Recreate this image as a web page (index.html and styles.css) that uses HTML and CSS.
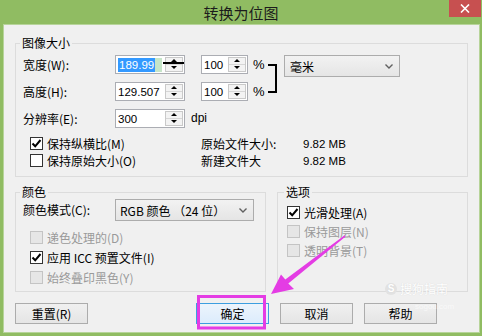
FILE: index.html
```html
<!DOCTYPE html>
<html lang="zh-CN">
<head>
    <meta charset="UTF-8">
    <title>转换为位图</title>
    <link rel="stylesheet" href="styles.css">
</head>
<body>
<div class="window">
    <div class="titlebar">
        <h1 class="titlebar__title">转换为位图</h1>
        <button class="titlebar__close" type="button">
            <svg width="10" height="9" viewBox="0 0 10 9"><path d="M1 0.5 L9 8.5 M9 0.5 L1 8.5" stroke="#fff" stroke-width="1.6"/></svg>
        </button>
    </div>

    <div class="dialog">
        <fieldset class="group group--size">
            <legend class="group__title">图像大小</legend>
            <div class="size-grid">
                <span class="field-label">宽度(W):</span>
                <div class="spin spin--wide">
                    <span class="spin__value"><span class="spin__sel">189.99</span><span class="spin__tint"></span></span>
                    <span class="spin__btns"><i class="spin__up"></i><i class="spin__down"></i></span>
                    <span class="spin__mark"></span>
                </div>
                <div class="spin spin--pct">
                    <span class="spin__value">100</span>
                    <span class="spin__btns"><i class="spin__up"></i><i class="spin__down"></i></span>
                </div>
                <span class="unit">%</span>
                <span class="bracket"></span>
                <div class="combo combo--units">
                    <span>毫米</span>
                    <svg width="8" height="5" viewBox="0 0 8 5"><path d="M0.5 0.5 L4 4 L7.5 0.5" fill="none" stroke="#606060" stroke-width="1.4"/></svg>
                </div>

                <span class="field-label">高度(H):</span>
                <div class="spin spin--wide">
                    <span class="spin__value">129.507</span>
                    <span class="spin__btns"><i class="spin__up"></i><i class="spin__down"></i></span>
                </div>
                <div class="spin spin--pct">
                    <span class="spin__value">100</span>
                    <span class="spin__btns"><i class="spin__up"></i><i class="spin__down"></i></span>
                </div>
                <span class="unit">%</span>

                <span class="field-label">分辨率(E):</span>
                <div class="spin spin--wide">
                    <span class="spin__value">300</span>
                    <span class="spin__btns"><i class="spin__up"></i><i class="spin__down"></i></span>
                </div>
                <span class="unit unit--dpi">dpi</span>
            </div>

            <div class="size-info">
                <label class="check">
                    <span class="check__box"><svg width="11" height="11" viewBox="0 0 11 11"><path d="M1.5 5.5 L4.2 8.3 L9.5 2" fill="none" stroke="#000" stroke-width="2"/></svg></span>
                    保持纵横比(M)
                </label>
                <span class="info-label">原始文件大小:</span>
                <span class="info-value">9.82 MB</span>

                <label class="check">
                    <span class="check__box"></span>
                    保持原始大小(O)
                </label>
                <span class="info-label">新建文件大</span>
                <span class="info-value">9.82 MB</span>
            </div>
        </fieldset>

        <div class="groups-row">
            <fieldset class="group group--color">
                <legend class="group__title">颜色</legend>
                <div class="color-mode">
                    <span class="field-label">颜色模式(C):</span>
                    <div class="combo combo--mode">
                        <span>RGB 颜色 （24 位）</span>
                        <svg width="8" height="5" viewBox="0 0 8 5"><path d="M0.5 0.5 L4 4 L7.5 0.5" fill="none" stroke="#606060" stroke-width="1.4"/></svg>
                    </div>
                </div>
                <div class="check-list">
                    <label class="check check--disabled"><span class="check__box"></span>递色处理的(D)</label>
                    <label class="check">
                        <span class="check__box"><svg width="11" height="11" viewBox="0 0 11 11"><path d="M1.5 5.5 L4.2 8.3 L9.5 2" fill="none" stroke="#000" stroke-width="2"/></svg></span>
                        应用 ICC 预置文件(I)
                    </label>
                    <label class="check check--disabled"><span class="check__box"></span>始终叠印黑色(Y)</label>
                </div>
            </fieldset>

            <fieldset class="group group--options">
                <legend class="group__title">选项</legend>
                <div class="check-list check-list--tight">
                    <label class="check">
                        <span class="check__box"><svg width="11" height="11" viewBox="0 0 11 11"><path d="M1.5 5.5 L4.2 8.3 L9.5 2" fill="none" stroke="#000" stroke-width="2"/></svg></span>
                        光滑处理(A)
                    </label>
                    <label class="check check--disabled"><span class="check__box"></span>保持图层(N)</label>
                    <label class="check check--disabled"><span class="check__box"></span>透明背景(T)</label>
                </div>
            </fieldset>
        </div>

        <div class="buttons">
            <button class="btn btn--reset" type="button">重置(R)</button>
            <button class="btn btn--default" type="button">确定</button>
            <button class="btn" type="button">取消</button>
            <button class="btn" type="button">帮助</button>
        </div>
    </div>

    <div class="watermark">
        <span class="watermark__logo"><span class="watermark__s">S</span>搜狗指南</span>
        <span class="watermark__url">sogou.com</span>
    </div>

    <!-- пометки поверх скриншота -->
    <svg class="markup" width="482" height="336" viewBox="0 0 482 336">
        <rect x="198.5" y="296.5" width="66" height="31.5" fill="none" stroke="#e43ce4" stroke-width="3"/>
        <polygon fill="#e43ce4" points="271,294 281,274.5 285.3,279.6 344.6,235.3 345.6,236.6 288.3,283.6 294,289"/>
    </svg>
</div>
</body>
</html>
```

FILE: styles.css
```css
body {
    margin: 0;
    font-family: "Noto Sans CJK SC", "Noto Sans", sans-serif;
    font-size: 12px;
    color: #000;
}

.window {
    position: relative;
    width: 482px;
    height: 336px;
    box-sizing: border-box;
    padding: 0 3px 4px 4px;
    background: #90bc62;
    display: flex;
    flex-direction: column;
    overflow: hidden;
}

.titlebar {
    height: 25px;
    margin: 0 -3px 0 -4px;
    display: grid;
    grid-template-columns: 1fr auto 1fr;
    align-items: start;
}
.titlebar__title {
    grid-column: 2;
    margin: 0;
    font-size: 15px;
    font-weight: normal;
    line-height: 25px;
    color: #1c1c1c;
}
.titlebar__close {
    grid-column: 3;
    justify-self: end;
    width: 32px;
    height: 17px;
    margin-right: 1px;
    padding: 0;
    border: 0;
    background: #c75050;
    display: grid;
    place-items: center;
}

.dialog {
    flex: 1;
    display: flex;
    flex-direction: column;
    padding: 11px 11px 0;
    background: #f0f0f0;
    box-shadow: 0 0 0 1px #b7d49a;
}

.group {
    margin: 0;
    min-width: 0;
    padding: 0 7px 7px;
    border: 1px solid #dcdcdc;
}
.group__title {
    margin-left: -3px;
    padding: 0 2px;
    line-height: 14px;
}
.group--size {
    padding-top: 5px;
}

.field-label {
    line-height: 19px;
    white-space: nowrap;
}

.size-grid {
    display: grid;
    grid-template-columns: 92px 70px 16px 47px 20px 9px 7px 116px;
    grid-template-rows: 19px 19px 19px;
    row-gap: 8px;
}
.size-grid .field-label {
    grid-column: 1;
}
.spin--wide {
    grid-column: 2;
}
.spin--pct {
    grid-column: 4;
}
.unit {
    grid-column: 5;
    padding-left: 5px;
    line-height: 19px;
    font-family: "Liberation Sans", sans-serif;
    font-size: 13px;
}
.unit--dpi {
    grid-column: 3 / 6;
    padding-left: 6px;
    font-size: 12px;
}
.bracket {
    grid-column: 6;
    grid-row: 1 / 3;
    margin-top: 9px;
    height: 29px;
    box-sizing: border-box;
    border: 2px solid #000;
    border-left: 0;
}
.combo--units {
    grid-column: 8;
    grid-row: 1;
}

.spin {
    position: relative;
    display: flex;
    box-sizing: border-box;
    height: 19px;
    border: 1px solid #abadb3;
    background: #fff;
}
.spin__value {
    flex: 1;
    display: flex;
    align-items: center;
    padding: 0 2px;
    font-family: "Liberation Sans", sans-serif;
    font-size: 11.5px;
    white-space: nowrap;
    overflow: hidden;
}
.spin__sel {
    display: inline-block;
    height: 14px;
    line-height: 14px;
    padding: 0 1px;
    background: #3399ff;
    color: #fff;
}
.spin__tint {
    display: inline-block;
    width: 12px;
    height: 14px;
    background: #c6e5c8;
}
.spin__btns {
    width: 16px;
    margin: 1px;
    display: grid;
    grid-template-rows: 1fr 1fr;
    border: 1px solid #c9c9c9;
    background: #f3f3f3;
}
.spin__up,
.spin__down {
    display: grid;
    place-items: center;
}
.spin__up::before,
.spin__down::before {
    content: "";
    border-left: 3px solid transparent;
    border-right: 3px solid transparent;
}
.spin__up {
    border-bottom: 1px solid #d6d6d6;
}
.spin__up::before {
    border-bottom: 3px solid #000;
}
.spin__down::before {
    border-top: 3px solid #000;
}
.spin__mark {
    position: absolute;
    left: 47px;
    width: 21px;
    top: 6px;
    height: 2px;
    background: #000;
}

.combo {
    box-sizing: border-box;
    height: 22px;
    display: flex;
    align-items: center;
    justify-content: space-between;
    padding: 0 6px 0 5px;
    border: 1px solid #acacac;
    background: linear-gradient(#f2f2f2, #e5e5e5);
    white-space: nowrap;
}

.size-info {
    display: grid;
    grid-template-columns: 178px 102px auto;
    grid-auto-rows: 17px;
    align-items: center;
    margin-top: 7px;
}
.size-info .check {
    margin-left: 7px;
    height: 17px;
}
.info-value {
    font-family: "Liberation Sans", sans-serif;
    font-size: 11.5px;
}

.check {
    display: flex;
    align-items: center;
    gap: 4px;
    height: 18px;
    white-space: nowrap;
}
.check__box {
    width: 13px;
    height: 13px;
    box-sizing: border-box;
    border: 1px solid #333;
    background: #fff;
    display: grid;
    place-items: center;
}
.check--disabled {
    color: #9a9a9a;
}
.check--disabled .check__box {
    border-color: #c4c4c4;
    background: #e6e6e6;
}

.groups-row {
    display: flex;
    gap: 11px;
    margin-top: 8px;
}
.group--color {
    width: 251px;
    box-sizing: border-box;
    padding-bottom: 5px;
}
.group--options {
    flex: 1;
    padding: 4px 9px 5px;
}
.color-mode {
    display: grid;
    grid-template-columns: 92px 139px;
    align-items: center;
}
.color-mode .field-label {
    line-height: 22px;
}
.combo--mode {
    padding-left: 4px;
}
.check-list {
    display: flex;
    flex-direction: column;
    gap: 2px;
    margin-top: 7px;
    padding-left: 7px;
}
.check-list--tight {
    gap: 1px;
    margin-top: 0;
    padding-left: 0;
}

.buttons {
    display: flex;
    gap: 11px;
    margin-top: 11px;
    padding: 0 31px 0 0;
}
.btn {
    width: 73px;
    height: 21px;
    padding: 0;
    border: 1px solid #acacac;
    background: linear-gradient(#f0f0f0, #e5e5e5);
    font: inherit;
    color: #000;
}
.btn--reset {
    margin-right: auto;
}
.btn--default {
    border-color: #3c9ee0;
    background: linear-gradient(#ecf4fc, #dcecfc);
}

.watermark {
    position: absolute;
    left: 385px;
    top: 282px;
    display: flex;
    flex-direction: column;
    align-items: flex-start;
    pointer-events: none;
}
.watermark__logo {
    display: flex;
    align-items: center;
    gap: 3px;
    font-size: 12px;
    line-height: 14px;
    color: #fff;
    text-shadow: 0 0 1px #cfcfcf;
}
.watermark__s {
    width: 12px;
    height: 12px;
    border-radius: 50%;
    background: #e2e2e2;
    color: #fff;
    font-family: "Liberation Sans", sans-serif;
    font-weight: bold;
    font-size: 10px;
    line-height: 12px;
    text-align: center;
}
.watermark__url {
    margin: 6px 0 0 30px;
    font-family: "Liberation Sans", sans-serif;
    font-size: 8px;
    line-height: 10px;
    color: rgba(255, 255, 255, 0.6);
}

.markup {
    position: absolute;
    left: 0;
    top: 0;
    pointer-events: none;
}
```
